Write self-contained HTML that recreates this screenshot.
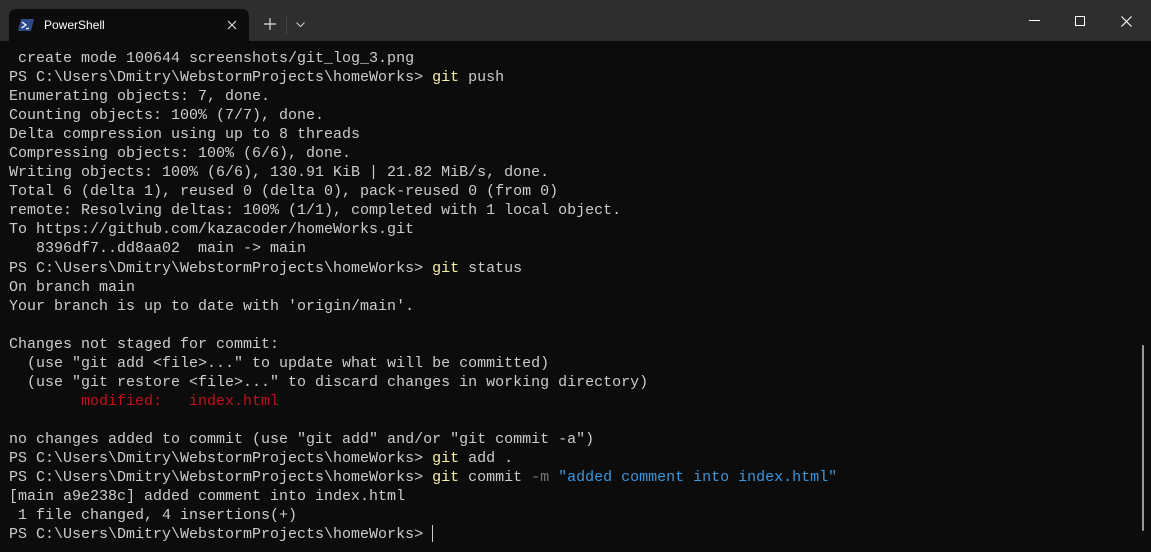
<!DOCTYPE html>
<html><head><meta charset="utf-8"><style>
*{margin:0;padding:0;box-sizing:border-box}
body{width:1151px;height:552px;background:#0c0c0c;overflow:hidden;position:relative;font-family:"Liberation Sans",sans-serif}
.bar{position:absolute;left:0;top:0;width:1151px;height:41px;background:#2e2e2e}
.tab{position:absolute;left:9px;top:9px;width:240px;height:32px;background:#0c0c0c;border-radius:7px 7px 0 0}
.tab .t{position:absolute;left:35px;top:9px;color:#fff;font-size:12px}
.term{position:absolute;left:9px;top:49px;font-family:"Liberation Mono",monospace;font-size:15px;line-height:19.04px;color:#cccccc;white-space:pre}
.y{color:#f9f1a5}.b{color:#3a96dd}.r{color:#c50f1f}.g{color:#767676}
.sb{position:absolute;left:1142px;top:345px;width:2px;height:186px;background:#999;border-radius:1px}
</style></head><body>
<div class="bar">
<div class="tab">
<svg style="position:absolute;left:9px;top:10px" width="16" height="12" viewBox="0 0 16 12"><path d="M3 0H16L13 12H0Z" fill="#2b4a8a"/><path d="M4 3L8 6L3.5 9M8 9.5H11" stroke="#fff" stroke-width="1.2" fill="none"/></svg>
<span class="t">PowerShell</span>
<svg style="position:absolute;left:218px;top:11px" width="10" height="10"><path d="M1 1L9 9M9 1L1 9" stroke="#ddd" stroke-width="1.2"/></svg>
</div>
<svg style="position:absolute;left:264px;top:18px" width="12" height="12"><path d="M6 0V12M0 6H12" stroke="#ddd" stroke-width="1.2"/></svg>
<div style="position:absolute;left:286px;top:16px;width:1px;height:18px;background:#444"></div>
<svg style="position:absolute;left:296px;top:22px" width="9" height="6"><path d="M0.5 0.5L4.5 4.5L8.5 0.5" stroke="#ccc" stroke-width="1.1" fill="none"/></svg>
<div style="position:absolute;left:1029px;top:20px;width:11px;height:1px;background:#fff"></div>
<div style="position:absolute;left:1075px;top:16px;width:10px;height:10px;border:1px solid #fff"></div>
<svg style="position:absolute;left:1121px;top:16px" width="11" height="11"><path d="M0.5 0.5L10.5 10.5M10.5 0.5L0.5 10.5" stroke="#fff" stroke-width="1.1"/></svg>
</div>
<div class="term"> create mode 100644 screenshots/git_log_3.png
PS C:\Users\Dmitry\WebstormProjects\homeWorks> <span class="y">git</span> push
Enumerating objects: 7, done.
Counting objects: 100% (7/7), done.
Delta compression using up to 8 threads
Compressing objects: 100% (6/6), done.
Writing objects: 100% (6/6), 130.91 KiB | 21.82 MiB/s, done.
Total 6 (delta 1), reused 0 (delta 0), pack-reused 0 (from 0)
remote: Resolving deltas: 100% (1/1), completed with 1 local object.
To https://github.com/kazacoder/homeWorks.git
   8396df7..dd8aa02  main -&gt; main
PS C:\Users\Dmitry\WebstormProjects\homeWorks> <span class="y">git</span> status
On branch main
Your branch is up to date with 'origin/main'.

Changes not staged for commit:
  (use "git add &lt;file&gt;..." to update what will be committed)
  (use "git restore &lt;file&gt;..." to discard changes in working directory)
        <span class="r">modified:   index.html</span>

no changes added to commit (use "git add" and/or "git commit -a")
PS C:\Users\Dmitry\WebstormProjects\homeWorks> <span class="y">git</span> add .
PS C:\Users\Dmitry\WebstormProjects\homeWorks> <span class="y">git</span> commit <span class="g">-m</span> <span class="b">"added comment into index.html"</span>
[main a9e238c] added comment into index.html
 1 file changed, 4 insertions(+)
PS C:\Users\Dmitry\WebstormProjects\homeWorks> <span style="display:inline-block;width:1px;height:17px;background:#ccc;vertical-align:-4px"></span></div>
<div class="sb"></div>
</body></html>
